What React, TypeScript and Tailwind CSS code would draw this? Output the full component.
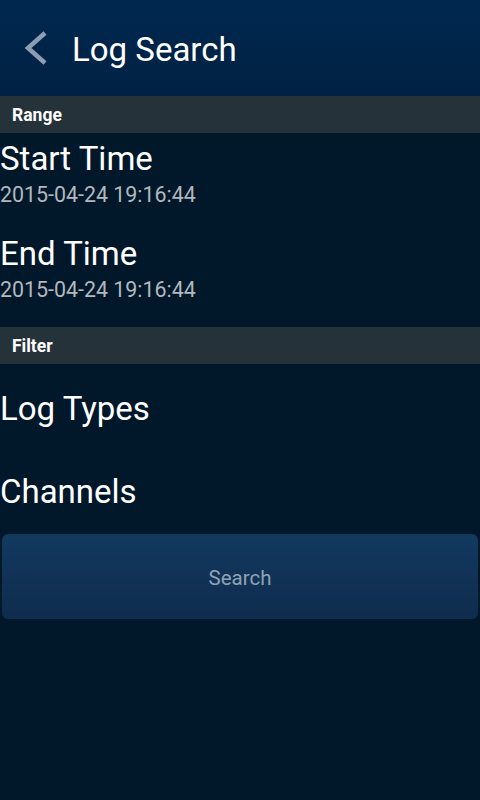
import React from "react";

export default function App() {
  return (
    <div
      className="w-[480px] h-[800px] bg-[#01172a] flex flex-col"
      style={{ fontFamily: "Roboto, 'Noto Sans', sans-serif" }}
    >
      <div className="h-[96px] bg-gradient-to-b from-[#00284f] to-[#002143] flex items-center">
        <svg width="48" height="40" viewBox="0 0 48 40" className="ml-[14px] shrink-0">
          <polyline
            points="31,5 14,20 31,35"
            fill="none"
            stroke="#8d9db2"
            strokeWidth="4.5"
            strokeLinecap="butt"
            strokeLinejoin="miter"
          />
        </svg>
        <span className="ml-[10px] mt-[2px] text-white text-[33px] leading-none">Log Search</span>
      </div>

      <div className="h-[37px] bg-[#263239] flex items-center pl-[12px]">
        <span className="mt-[3px] text-white text-[17.5px] font-bold leading-none">Range</span>
      </div>

      <div className="flex flex-col">
        <div className="mt-[9px] text-white text-[33px] leading-none">Start Time</div>
        <div className="mt-[9px] text-[#b2b8be] text-[21.4px] leading-none">2015-04-24 19:16:44</div>
        <div className="mt-[32px] text-white text-[33px] leading-none">End Time</div>
        <div className="mt-[9px] text-[#b2b8be] text-[21.4px] leading-none">2015-04-24 19:16:44</div>
      </div>

      <div className="mt-[26px] h-[37px] bg-[#263239] flex items-center pl-[12px]">
        <span className="mt-[3px] text-white text-[17.5px] font-bold leading-none">Filter</span>
      </div>

      <div className="mt-[28px] text-white text-[33px] leading-none">Log Types</div>
      <div className="mt-[50px] text-white text-[33px] leading-none">Channels</div>

      <div className="mt-[26px] mx-[2px] h-[85px] rounded-[6px] bg-gradient-to-b from-[#12395f] to-[#0e2c4d] flex items-center justify-center">
        <span className="mt-[3px] text-[#8fa2b6] text-[20.5px] leading-none">Search</span>
      </div>
    </div>
  );
}
